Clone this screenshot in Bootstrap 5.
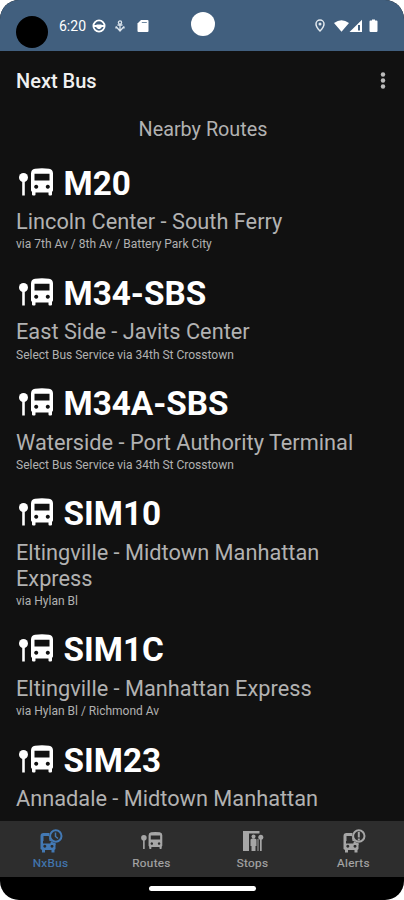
<!DOCTYPE html>
<html lang="en">
<head>
<meta charset="utf-8">
<meta name="viewport" content="width=device-width, initial-scale=1">
<title>Next Bus</title>
<link href="https://cdn.jsdelivr.net/npm/bootstrap@5.3.0/dist/css/bootstrap.min.css" rel="stylesheet">
<style>
body{background:#fff;font-family:Roboto,sans-serif;line-height:1.2}
.phone{width:404px;height:900px;background:#000;border-radius:19px}
.status{height:51px;background:#415f7e;color:#fff;padding:0 25px 0 16px}
.camera{width:32px;height:32px;background:#000;margin-top:12px}
.clock{font-size:14px;margin:2px 6px 0 11px}
.card-icon{margin-left:11px}
.touch-dot{width:24px;height:24px;background:#fff;left:191px;top:12px}
.screen{background:#111;min-height:0}
.app-bar{height:59px;padding:0 18px 0 16px}
.app-title{font-size:20px;font-weight:500;color:#f0f0f0}
.heading{font-size:19.800px;line-height:24px;color:#b2b2b2;padding:8px 0 0 2px;height:53.5px}
.route{padding:0 16px;margin-bottom:21.500px;color:#b2b2b2}
.route-id{height:40px;font-size:33.300px;line-height:40px;font-weight:700;color:#fff;margin-bottom:5.5px}
.route-id svg{margin:0 9.500px 4px 3px}
.route-name{font-size:21.750px;line-height:25.800px}
.route-via{font-size:12px;line-height:15px;margin-top:2.500px}
.tabs{height:56px;background:#2d2d2d;font-size:11.700px;letter-spacing:.35px}
.tab{color:#a6a6a6;padding-top:7px}
.tab.on{color:#4379b4}
.tab span{line-height:14px;margin-top:3px;-webkit-text-stroke:.2px currentColor}
.home{height:23px}
.home-pill{width:107px;height:5px;background:#fff}
</style>
<script src="https://cdn.jsdelivr.net/npm/bootstrap@5.3.0/dist/js/bootstrap.bundle.min.js"></script>
</head>
<body>
<svg width="0" height="0" class="position-absolute">
<defs>
<symbol id="stop-bus" viewBox="0 0 35 28">
<circle cx="4.500" cy="9.500" r="4.500"/><path d="M3.200 12h2.600v15.500H3.200z"/>
<path fill-rule="evenodd" d="M16 .8Q23 -.2 30 .8Q34 1.500 34 5.500V22.500L33 24V26.500Q33 27.500 31.800 27.500H30.500Q29.500 27.500 29.500 26.500V24.500H16.500V26.500Q16.500 27.500 15.500 27.500H14.200Q13 27.500 13 26.500V24L12 22.500V5.500Q12 1.500 16 .8ZM15.500 5.800V12.500H30.500V5.800ZM17.200 16.800a2 2 0 1 0 .01 0ZM28.800 16.800a2 2 0 1 0 .01 0Z"/>
</symbol>
<symbol id="small-bus" viewBox="0 0 24 25">
<path fill-rule="evenodd" d="M4.500 5H10.500Q9.500 9.500 12.500 13H4V15.500H16.500V21L15.500 22V24.500H12.500V22H6V24.500H3V22L1.500 21V8Q1.500 5 4.500 5ZM4.500 8V13H10.500L9.800 8ZM5.800 16.800a1.500 1.500 0 1 0 .01 0ZM13 16.800a1.500 1.500 0 1 0 .01 0Z"/><path d="M12 13Q14 14.800 16.500 15V17H11z"/>
</symbol>
</defs>
</svg>
<main class="phone overflow-hidden d-flex flex-column position-relative">
<header class="status d-flex align-items-center flex-shrink-0">
<div class="camera rounded-circle"></div>
<div class="clock">6:20</div>
<svg width="14" height="14" viewBox="0 0 14 14" fill="none" stroke="#fff" stroke-width="1.800"><circle cx="7" cy="7" r="5.600"/><path d="M2 7h10" stroke-width="1.800"/><path fill="#fff" stroke="none" d="M4.500 5.500h5v3L8 10H6L4.500 8.500z"/></svg>
<svg class="ms-2" width="12" height="14" viewBox="0 0 12 14" fill="none" stroke="#dce5ed" stroke-width="1.300"><circle cx="6" cy="3.500" r="1.600"/><path d="M6 5v7M3.500 6h5M2 7.500l4 4.500 4-4.500M2 7.500v2M10 7.500v2"/></svg>
<svg class="card-icon" width="12" height="14" viewBox="0 0 12 14"><path fill="#fff" d="M4 1h6.500q1 0 1 1v10q0 1-1 1h-9q-1 0-1-1V4.500z"/><path stroke="#718aa2" d="M4.800 3.500h5"/></svg>
<div class="touch-dot rounded-circle position-absolute"></div>
<svg class="ms-auto" width="64" height="16" viewBox="0 0 64 16"><path d="M5 2a4 4 0 0 1 4 4q0 3-4 7Q1 9 1 6a4 4 0 0 1 4-4z" fill="none" stroke="#e1e8ee" stroke-width="1.500"/><circle cx="5" cy="6" r="1.500" fill="#e1e8ee"/><path fill="#fff" d="M19 5q7.500-5.500 15 0l-7.500 8.800zM34.500 14L47 1.800V14z"/><path fill="#415f7e" d="M43 7h2v5.500h-2z"/><path fill="#fff" d="M55.500 2.500h1.500v-1h3v1h1.500q1 0 1 1V12.800q0 1.200-1 1.200h-6q-1 0-1-1.200V3.500q0-1 1-1z"/></svg>
</header>
<section class="screen flex-grow-1 overflow-hidden">
<div class="app-bar d-flex align-items-center justify-content-between">
<div class="app-title">Next Bus</div>
<svg width="6" height="18" viewBox="0 0 6 18" fill="#bbb"><circle cx="3" cy="2.500" r="2.200"/><circle cx="3" cy="8.500" r="2.200"/><circle cx="3" cy="14.500" r="2.200"/></svg>
</div>
<div class="heading text-center">Nearby Routes</div>
<article class="route"><div class="route-id d-flex align-items-center"><svg width="35" height="28" fill="#fff"><use href="#stop-bus"/></svg>M20</div><div class="route-name">Lincoln Center - South Ferry</div><div class="route-via">via 7th Av / 8th Av / Battery Park City</div></article>
<article class="route"><div class="route-id d-flex align-items-center"><svg width="35" height="28" fill="#fff"><use href="#stop-bus"/></svg>M34-SBS</div><div class="route-name">East Side - Javits Center</div><div class="route-via">Select Bus Service via 34th St Crosstown</div></article>
<article class="route"><div class="route-id d-flex align-items-center"><svg width="35" height="28" fill="#fff"><use href="#stop-bus"/></svg>M34A-SBS</div><div class="route-name">Waterside - Port Authority Terminal</div><div class="route-via">Select Bus Service via 34th St Crosstown</div></article>
<article class="route"><div class="route-id d-flex align-items-center"><svg width="35" height="28" fill="#fff"><use href="#stop-bus"/></svg>SIM10</div><div class="route-name">Eltingville - Midtown Manhattan Express</div><div class="route-via">via Hylan Bl</div></article>
<article class="route"><div class="route-id d-flex align-items-center"><svg width="35" height="28" fill="#fff"><use href="#stop-bus"/></svg>SIM1C</div><div class="route-name">Eltingville - Manhattan Express</div><div class="route-via">via Hylan Bl / Richmond Av</div></article>
<article class="route mb-0"><div class="route-id d-flex align-items-center"><svg width="35" height="28" fill="#fff"><use href="#stop-bus"/></svg>SIM23</div><div class="route-name">Annadale - Midtown Manhattan</div></article>
</section>
<nav class="tabs d-flex flex-shrink-0">
<div class="tab on col-3 d-flex flex-column align-items-center"><svg width="24" height="25" viewBox="0 0 24 25" fill="currentColor"><use href="#small-bus"/><circle cx="16.800" cy="8" r="5.700" fill="none" stroke="currentColor" stroke-width="2"/><path d="M16.500 4.500V8.500L19 10.500" fill="none" stroke="currentColor" stroke-width="1.500"/></svg><span>NxBus</span></div>
<div class="tab col-3 d-flex flex-column align-items-center"><svg width="22" height="25" viewBox="0 -7 35 40" fill="currentColor"><use href="#stop-bus" width="35" height="28" y="-1"/></svg><span>Routes</span></div>
<div class="tab col-3 d-flex flex-column align-items-center"><svg width="22" height="25" viewBox="0 0 22 25" fill="currentColor"><path d="M1 3H17.500V5.500H7V23H1zM8.500 11.500Q11.500 9 14.500 11.500V18H13.500V23H9.500V18H8.500zM18 10H19.700V23H18zM15.500 11H16.500V23H15.500z"/><circle cx="11.500" cy="8.500" r="2"/><circle cx="18.800" cy="9.300" r="2.500"/></svg><span>Stops</span></div>
<div class="tab col-3 d-flex flex-column align-items-center"><svg width="24" height="25" viewBox="0 0 24 25" fill="currentColor"><use href="#small-bus"/><circle cx="16.800" cy="8" r="5.700" fill="none" stroke="currentColor" stroke-width="2"/><path d="M15.800 4h2V9.500h-2zM15.800 10.500h2v2h-2z"/></svg><span>Alerts</span></div>
</nav>
<footer class="home d-flex align-items-center justify-content-center flex-shrink-0"><div class="home-pill rounded-pill"></div></footer>
</main>
</body>
</html>
